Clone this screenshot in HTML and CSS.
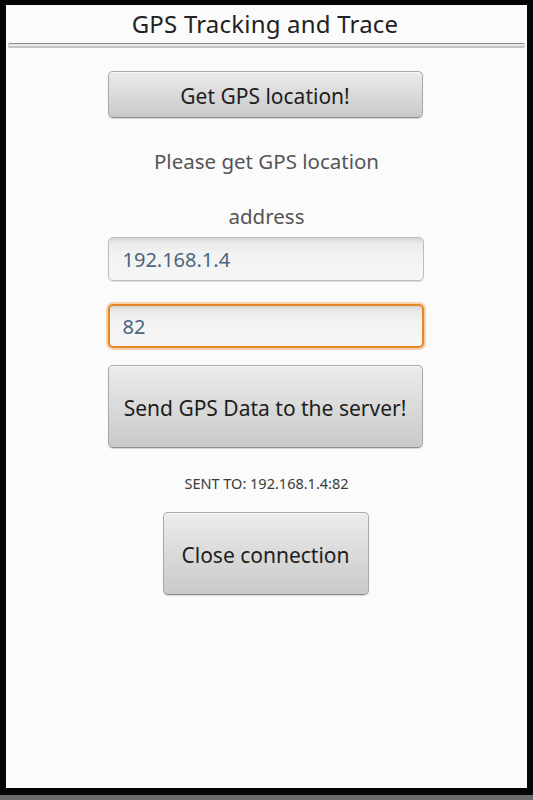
FILE: index.html
```html
<!DOCTYPE html>
<html>
<head>
<meta charset="utf-8">
<link rel="stylesheet" href="styles.css">
</head>
<body>
<div class="screen">
  <div class="titlebar">GPS Tracking and Trace</div>
  <div class="separator"></div>
  <div class="content">
    <div class="btn btn-wide btn-short">Get GPS location!</div>
    <div class="label label-first">Please get GPS location</div>
    <div class="label label-second">address</div>
    <div class="field">192.168.1.4</div>
    <div class="field field-focused">82</div>
    <div class="btn btn-wide btn-tall">Send GPS Data to the server!</div>
    <div class="status">SENT TO: 192.168.1.4:82</div>
    <div class="btn btn-narrow btn-tall">Close connection</div>
  </div>
</div>
<div class="frame-bottom"></div>
<div class="taskbar"></div>
</body>
</html>
```
FILE: styles.css
```css
html, body {
  margin: 0;
  padding: 0;
}
body {
  width: 533px;
  height: 800px;
  background: #050505;
  display: flex;
  flex-direction: column;
  overflow: hidden;
  font-family: "Noto Sans", "Open Sans", sans-serif;
}
.screen {
  margin: 5px 6px 0 6px;
  height: 783px;
  background: #fbfbfb;
  display: flex;
  flex-direction: column;
}
.titlebar {
  height: 36px;
  padding-bottom: 2px;
  display: flex;
  align-items: center;
  justify-content: center;
  font-size: 24px;
  letter-spacing: 0.2px;
  color: #222;
  padding-right: 3px;
}
.separator {
  margin: 0 2px;
  height: 2px;
  background: #e6e6e6;
  border-top: 1px solid #8c8c8c;
  border-bottom: 2px solid #c4c4c4;
  border-radius: 2px;
}
.content {
  display: flex;
  flex-direction: column;
  align-items: center;
  padding-top: 23px;
}
.btn {
  box-sizing: border-box;
  display: flex;
  align-items: center;
  justify-content: center;
  padding-top: 2px;
  background: linear-gradient(#ececec 0%, #dcdcdc 45%, #c9c9c9 100%);
  border: 1px solid #a8a8a8;
  border-bottom-color: #8e8e8e;
  border-radius: 5px;
  box-shadow: inset 0 1px 0 #fafafa, 0 1px 1px rgba(0,0,0,0.15);
  color: #1e1e1e;
  font-size: 21px;
}
.btn-wide {
  width: 315px;
  margin-left: -3px;
}
.btn-narrow {
  width: 206px;
  margin-left: -2px;
}
.btn-short {
  height: 47px;
}
.btn-tall {
  height: 83px;
  padding-top: 3px;
}
.label {
  height: 24px;
  line-height: 24px;
  font-size: 20.5px;
  color: #555;
}
.label-first {
  margin-top: 31px;
}
.label-second {
  margin-top: 31px;
}
.field {
  box-sizing: border-box;
  width: 316px;
  height: 44px;
  margin-left: -2px;
  padding-left: 14px;
  display: flex;
  align-items: center;
  font-size: 20px;
  color: #4a6580;
  background: linear-gradient(#d6d6d6 0%, #eaeaea 12%, #f3f3f3 40%, #f5f5f5 100%);
  border: 1px solid #bdbdbd;
  border-radius: 5px;
  box-shadow: 0 1px 1px rgba(0,0,0,0.12);
}
.label-second + .field {
  margin-top: 9px;
}
.field-focused {
  margin-top: 23px;
  border: 2px solid #e5862b;
  box-shadow: 0 0 0 2px rgba(242, 160, 80, 0.45);
  padding-left: 13px;
}
.field-focused + .btn {
  margin-top: 17px;
}
.status {
  margin-top: 26px;
  height: 18px;
  line-height: 18px;
  font-size: 14.5px;
  color: #3a3a3a;
}
.status + .btn {
  margin-top: 20px;
}
.frame-bottom {
  height: 7px;
  background: #050505;
}
.taskbar {
  flex: 1;
  background: #6b6b6b;
}
```
